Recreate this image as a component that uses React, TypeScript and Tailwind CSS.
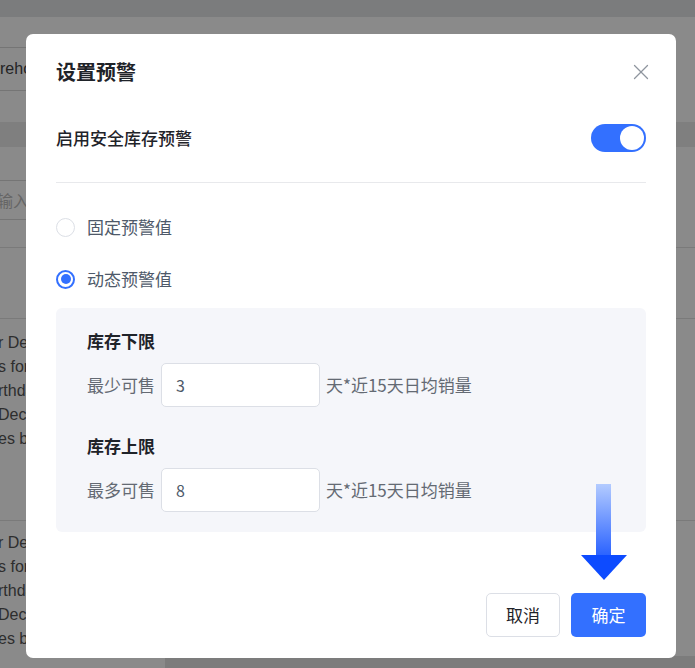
import { X } from 'lucide-react'

const font = { fontFamily: '"Noto Sans CJK SC", "Noto Sans", sans-serif' }
const latin = { fontFamily: '"Liberation Sans", Arial, sans-serif' }

function Backdrop() {
  const rows = ['r Dec', 's for', 'rthday', 'Dec', 'es by']
  return (
    <div className="absolute inset-0 overflow-hidden bg-white" style={latin}>
      <div className="h-[17px] bg-[#e4e5e8]" />
      <div className="mt-[30px] ml-[-60px] flex h-[44px] w-[400px] items-center rounded border border-[#d9d9d9] pl-[59px] text-[16px] text-[#444]">
        rehouse
      </div>
      <div className="mt-[31px] h-[25px] bg-[#ebebeb]" />
      <div className="mt-[33px] ml-[-40px] flex h-[40px] w-[400px] items-center rounded border border-[#d9d9d9] pl-[20px] text-[16px] text-[#bbb]" style={font}>
        请输入
      </div>
      <div className="mt-[27px] border-t border-[#e2e2e2]" />
      <div className="mt-[70px] border-t border-[#e2e2e2]" />
      <div className="flex flex-col pt-[12px] text-[16px] leading-[24px] text-[#555]">
        {rows.map((r) => (
          <div key={'a' + r} className="ml-[-2px]">{r}</div>
        ))}
      </div>
      <div className="mt-[69px] border-t border-[#e2e2e2]" />
      <div className="flex flex-col pt-[10px] text-[16px] leading-[24px] text-[#555]">
        {rows.map((r) => (
          <div key={'b' + r} className="ml-[-2px]">{r}</div>
        ))}
      </div>
      <div className="absolute bottom-0 left-[165px] right-0 h-[12px] bg-[#e6e6e6]" />
      <div className="absolute inset-0 bg-black/[0.46]" />
    </div>
  )
}

function Radio({ checked, label }: { checked: boolean; label: string }) {
  return (
    <div className="flex h-[24px] items-center gap-[12px]">
      {checked ? (
        <span className="flex h-[19px] w-[19px] items-center justify-center rounded-full border-[2px] border-[#3370ff]">
          <span className="h-[10px] w-[10px] rounded-full bg-[#3370ff]" />
        </span>
      ) : (
        <span className="h-[19px] w-[19px] rounded-full border-[1.5px] border-[#dcdfe6] bg-white" />
      )}
      <span className="text-[17px] text-[#4e5969]">{label}</span>
    </div>
  )
}

function LimitField({ title, label, value }: { title: string; label: string; value: string }) {
  return (
    <div>
      <div className="text-[17px] font-semibold leading-[24px] text-[#1f2329]">{title}</div>
      <div className="mt-[10px] flex items-center">
        <span className="w-[74px] text-[17px] text-[#646a73]">{label}</span>
        <div className="flex h-[44px] w-[159px] items-center rounded-[5px] border border-[#dcdfe6] bg-white px-[14px] text-[16px] text-[#4e5969]">
          {value}
        </div>
        <span className="ml-[6px] text-[17px] text-[#646a73]">天*近15天日均销量</span>
      </div>
    </div>
  )
}

function Arrow() {
  return (
    <svg className="absolute left-[555px] top-[450px]" width="46" height="96" viewBox="0 0 46 96">
      <defs>
        <linearGradient id="bar" x1="0" y1="0" x2="0" y2="1">
          <stop offset="0" stopColor="#b3cbff" />
          <stop offset="1" stopColor="#2a62ff" />
        </linearGradient>
      </defs>
      <rect x="15" y="0" width="15" height="72" fill="url(#bar)" />
      <polygon points="0,71 46,71 23,96" fill="#0d4bff" />
    </svg>
  )
}

export default function App() {
  return (
    <div className="relative h-[668px] w-[695px] overflow-hidden" style={font}>
      <Backdrop />
      <div className="absolute left-[26px] top-[34px] flex h-[624px] w-[650px] flex-col rounded-[7px] bg-white px-[30px] pt-[25px]">
        <div className="flex h-[26px] items-center justify-between">
          <span className="text-[20px] font-semibold text-[#1f2329]">设置预警</span>
          <X className="mr-[-8px] h-[26px] w-[26px] text-[#8f959e]" strokeWidth={1.2} />
        </div>
        <div className="mt-[39px] flex h-[28px] items-center justify-between">
          <span className="text-[17px] font-medium text-[#1f2329]">启用安全库存预警</span>
          <span className="flex h-[28px] w-[55px] items-center justify-end rounded-full bg-[#3370ff] pr-[2px]">
            <span className="h-[24px] w-[24px] rounded-full bg-white" />
          </span>
        </div>
        <div className="mt-[30px] border-t border-[#e8e9ec]" />
        <div className="mt-[32px]">
          <Radio checked={false} label="固定预警值" />
        </div>
        <div className="mt-[28px]">
          <Radio checked label="动态预警值" />
        </div>
        <div className="mt-[17px] flex h-[224px] flex-col gap-[27px] rounded-[6px] bg-[#f5f6fa] px-[31px] pt-[21px]">
          <LimitField title="库存下限" label="最少可售" value="3" />
          <LimitField title="库存上限" label="最多可售" value="8" />
        </div>
        <div className="mt-[61px] flex justify-end gap-[11px]">
          <button className="h-[44px] w-[74px] rounded-[5px] border border-[#dcdfe6] bg-white text-[17px] text-[#1f2329]">
            取消
          </button>
          <button className="h-[44px] w-[75px] rounded-[5px] bg-[#3370ff] text-[17px] text-white">
            确定
          </button>
        </div>
        <Arrow />
      </div>
    </div>
  )
}
